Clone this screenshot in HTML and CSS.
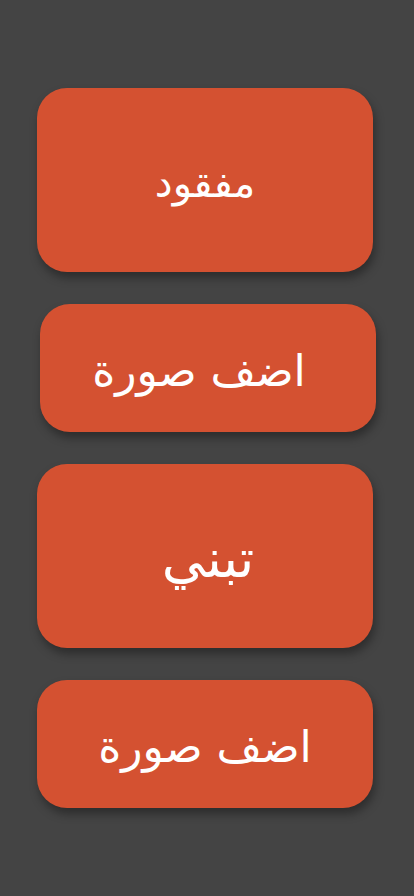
FILE: index.html
```html
<!DOCTYPE html>
<html lang="ar" dir="rtl">
<head>
<meta charset="utf-8">
<link rel="stylesheet" href="styles.css">
</head>
<body>
<main class="menu">
  <div class="btn btn-tall"><span class="label">مفقود</span></div>
  <div class="btn btn-short btn-shift"><span class="label label-wide label-offset">اضف صورة</span></div>
  <div class="btn btn-tall"><span class="label label-big">تبني</span></div>
  <div class="btn btn-short"><span class="label label-wide">اضف صورة</span></div>
</main>
</body>
</html>
```
FILE: styles.css
```css
html, body {
  margin: 0;
  padding: 0;
  background: #444444;
  height: 100%;
}
body {
  font-family: "DejaVu Sans", sans-serif;
}
.menu {
  direction: ltr;
  display: flex;
  flex-direction: column;
  gap: 32px;
  padding-top: 88px;
  padding-left: 37px;
}
.btn {
  width: 336px;
  background: #d45131;
  border-radius: 30px;
  box-shadow: 2px 6px 10px rgba(0,0,0,0.35);
  display: flex;
  align-items: center;
  justify-content: center;
  color: #ffffff;
  box-sizing: border-box;
}
.btn-tall {
  height: 184px;
}
.btn-short {
  height: 128px;
}
.btn-shift {
  margin-left: 3px;
}
.label {
  direction: rtl;
  font-size: 40px;
  line-height: 1;
  padding-top: 6px;
}
.label-wide {
  font-size: 44px;
}
.label-big {
  font-size: 54px;
  margin-left: 6px;
}
.label-offset {
  margin-right: 18px;
}
```
